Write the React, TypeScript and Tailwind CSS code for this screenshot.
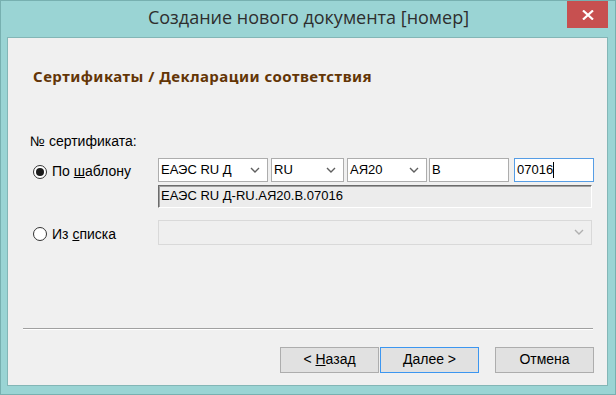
import React from "react";

const ui = { fontFamily: '"Liberation Sans", Arial, sans-serif' };

function Chevron({ color = "#5f5f5f" }: { color?: string }) {
  return (
    <svg width="10" height="6" viewBox="0 0 10 6" aria-hidden="true">
      <path d="M1 1 L5 5 L9 1" fill="none" stroke={color} strokeWidth="1.4" />
    </svg>
  );
}

function Combo({ value, width }: { value: string; width: string }) {
  return (
    <div className={`${width} h-[24px] flex items-center justify-between border border-[#adadad] bg-white pl-[2px] pr-[7px] text-[13px] text-black`}>
      <span>{value}</span>
      <Chevron />
    </div>
  );
}

function Radio({ checked }: { checked?: boolean }) {
  return (
    <span className="w-[14px] h-[14px] rounded-full border border-[#333] bg-white flex items-center justify-center shrink-0">
      {checked && <span className="w-[8px] h-[8px] rounded-full bg-[#1a1a1a]" />}
    </span>
  );
}

function Button({ children, primary }: { children: React.ReactNode; primary?: boolean }) {
  return (
    <button
      className={`w-[99px] h-[26px] flex items-center justify-center text-[14px] text-black bg-[#e1e1e1] border ${primary ? "border-[#3c96f0]" : "border-[#adadad]"}`}
      style={ui}
    >
      <span>{children}</span>
    </button>
  );
}

export default function App() {
  return (
    <div className="relative w-[616px] h-[395px] bg-[#9ad4d4] border border-[#77b0b0] flex flex-col overflow-hidden">
      {/* Title bar */}
      <div className="h-[36px] flex items-center justify-center pb-[3px] pl-[1px]">
        <span className="text-[18px] text-[#2e2e2e]" style={{ fontFamily: '"Open Sans", "Noto Sans", sans-serif' }}>
          Создание нового документа [номер]
        </span>
      </div>
      <div className="absolute top-0 right-[7px] w-[41px] h-[27px] bg-[#c75050] flex items-center justify-center">
        <svg width="12" height="10" viewBox="0 0 12 10" aria-hidden="true">
          <path d="M1 0.5 L11 9.5 M11 0.5 L1 9.5" stroke="white" strokeWidth="2.2" />
        </svg>
      </div>

      {/* Client area */}
      <div className="ml-[6px] mr-[7px] h-[349px] border border-[#83b6b6] bg-[#f0f0f0] flex flex-col" style={ui}>
        <div
          className="mt-[27px] ml-[25px] text-[15px] font-bold text-[#633506] tracking-[0.45px]"
          style={{ fontFamily: '"Noto Sans", "Open Sans", sans-serif' }}
        >
          Сертификаты / Декларации соответствия
        </div>

        <div className="mt-[45px] ml-[22px] text-[14px] text-black leading-[16px]">№ сертификата:</div>

        {/* Template row */}
        <div className="mt-[9px] flex">
          <div className="w-[150px] h-[24px] pl-[25px] pt-[4px] flex items-center gap-[5px] text-[14px] text-black">
            <Radio checked />
            <span>
              По <span className="underline">ш</span>аблону
            </span>
          </div>
          <div className="flex flex-col">
            <div className="flex">
              <Combo value="ЕАЭС RU Д" width="w-[110px]" />
              <div className="ml-[3px]">
                <Combo value="RU" width="w-[73px]" />
              </div>
              <div className="ml-[3px]">
                <Combo value="АЯ20" width="w-[80px]" />
              </div>
              <div className="ml-[2px] w-[80px] h-[24px] border border-[#adadad] bg-white pl-[2px] flex items-center text-[13px]">
                B
              </div>
              <div className="ml-[5px] w-[80px] h-[24px] border border-[#569de5] bg-white pl-[2px] flex items-center text-[13px]">
                07016<span className="w-px h-[16px] bg-black" />
              </div>
            </div>
            <div className="mt-[3px] w-[434px] h-[23px] border-t border-l border-[#6b6b6b] border-b border-r border-b-white border-r-white shadow-[inset_1px_1px_0_#a0a0a0] bg-[#ececec] pl-[2px] flex items-center text-[13px] text-black">
              ЕАЭС RU Д-RU.АЯ20.B.07016
            </div>
          </div>
        </div>

        {/* List row */}
        <div className="mt-[12px] flex">
          <div className="w-[150px] h-[25px] pl-[25px] pt-[4px] flex items-center gap-[5px] text-[14px] text-black">
            <Radio />
            <span>
              Из <span className="underline">с</span>писка
            </span>
          </div>
          <div className="w-[434px] h-[25px] border border-[#d9d9d9] bg-[#efefef] flex items-center justify-end pr-[7px]">
            <Chevron color="#b0b0b0" />
          </div>
        </div>

        {/* Separator */}
        <div className="mt-[83px] ml-[15px] w-[570px] h-[2px] border-t border-[#a0a0a0] border-b border-b-white" />

        {/* Buttons */}
        <div className="mt-[17px] ml-[272px] flex">
          <Button>
            &lt; <span className="underline">Н</span>азад
          </Button>
          <div className="ml-[1px]">
            <Button primary>
              <span className="underline">Д</span>алее &gt;
            </Button>
          </div>
          <div className="ml-[16px]">
            <Button>Отмена</Button>
          </div>
        </div>
      </div>
    </div>
  );
}
